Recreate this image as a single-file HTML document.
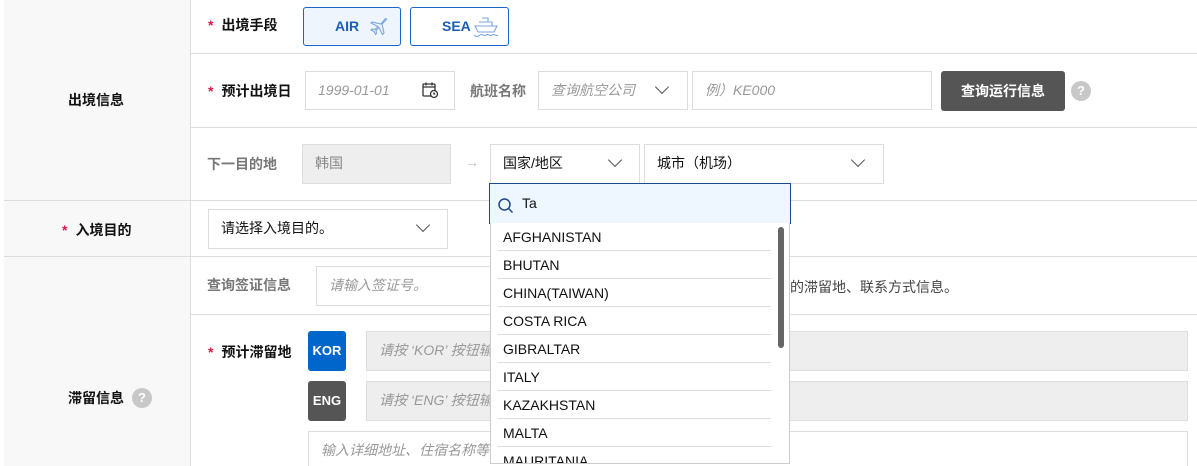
<!DOCTYPE html>
<html><head><meta charset="utf-8"><style>
*{box-sizing:border-box;margin:0;padding:0}
html,body{width:1197px;height:466px;overflow:hidden}
body{background:#fff;font-family:"Liberation Sans","Noto Sans CJK SC",sans-serif;font-size:14px;color:#111;position:relative}
.a{position:absolute}
.hl{position:absolute;height:1px;background:#ddd}
.lab{position:absolute;font-weight:bold;font-size:14px;color:#111;line-height:16px}
.st{color:#e0154a;font-weight:bold;margin-right:8px}
.box{position:absolute;border:1px solid #ddd;background:#fff;line-height:37px;padding-left:12px;font-size:14px}
.ph{color:#999;font-style:italic}
.chev{position:absolute;width:10px;height:10px;border-right:1.3px solid #555;border-bottom:1.3px solid #555;transform:rotate(45deg)}
.q{position:absolute;width:20px;height:20px;border-radius:50%;background:#c8c8c8;color:#fff;font-weight:bold;text-align:center;line-height:20px;font-size:13px}
.it{position:absolute;left:7px;padding-left:5px;width:273px;height:28px;line-height:28px;border-bottom:1px solid #ddd;font-size:14px;color:#111}
</style></head><body>
<div class="a" style="left:4px;top:0;width:187px;height:466px;background:#f8f8f8;border-right:1px solid #ddd"></div>
<div class="hl" style="left:191px;top:53px;width:1006px"></div>
<div class="hl" style="left:191px;top:127px;width:1006px"></div>
<div class="hl" style="left:4px;top:200px;width:1193px"></div>
<div class="hl" style="left:4px;top:256px;width:1193px"></div>
<div class="hl" style="left:191px;top:314px;width:1006px"></div>

<div class="lab" style="left:68px;top:92px">出境信息</div>
<div class="lab" style="left:62px;top:222px"><span class="st">*</span>入境目的</div>
<div class="lab" style="left:68px;top:390px">滞留信息</div>
<div class="q" style="left:132px;top:388px">?</div>

<div class="lab" style="left:208px;top:17px"><span class="st">*</span>出境手段</div>
<div class="a" style="left:303px;top:7px;width:98px;height:39px;border:1px solid #1a66c9;border-radius:3px;background:#eef5fd;color:#1a5fb4;font-weight:bold;line-height:37px;padding-left:31px;font-size:14px">AIR
<svg class="a" style="left:63px;top:8px" width="22" height="22" viewBox="0 0 22 22" fill="none" stroke="#7aa6dc" stroke-width="1.1"><path d="M18 3c1-1 2 0 1 1l-4 4 2 9-1.5 1.5-3.5-7-3 3 .5 3-1 1-1.5-3-3-1.5 1-1 3 .5 3-3-7-3.5L5 6l9 2z"/></svg></div>
<div class="a" style="left:410px;top:7px;width:99px;height:39px;border:1px solid #1a66c9;border-radius:3px;background:#fff;color:#1a5fb4;font-weight:bold;line-height:37px;padding-left:31px;font-size:14px">SEA
<svg class="a" style="left:61px;top:7px" width="28" height="24" viewBox="0 0 28 24" fill="none" stroke="#7aa6dc" stroke-width="1.1"><path d="M10 3h6v4M7 7h13v4M3 11h22l-3 6H6z M2 20c2 2 4 2 6 0s4 2 6 0 4 2 6 0 4 2 6 0"/></svg></div>

<div class="lab" style="left:208px;top:83px"><span class="st">*</span>预计出境日</div>
<div class="box ph" style="left:305px;top:71px;width:150px;height:39px">1999-01-01</div>
<svg class="a" style="left:421px;top:81px" width="18" height="18" viewBox="0 0 18 18" fill="none" stroke="#333" stroke-width="1.3"><rect x="2" y="3" width="12" height="12" rx="1"/><path d="M2 6h12M5 1.5v3M11 1.5v3"/><circle cx="13" cy="13" r="3.5" fill="#fff"/><path d="M13 11.5V13h1.3"/></svg>
<div class="lab" style="left:470px;top:83px;color:#777">航班名称</div>
<div class="box ph" style="left:538px;top:71px;width:150px;height:39px">查询航空公司</div>
<div class="chev" style="left:657px;top:82px"></div>
<div class="box ph" style="left:692px;top:71px;width:240px;height:39px">例）KE000</div>
<div class="a" style="left:941px;top:71px;width:124px;height:40px;background:#555;border-radius:3px;color:#fff;font-weight:bold;text-align:center;line-height:40px">查询运行信息</div>
<div class="q" style="left:1071px;top:81px">?</div>

<div class="lab" style="left:207px;top:156px;color:#777">下一目的地</div>
<div class="box" style="left:302px;top:144px;width:149px;height:40px;background:#eee;color:#888">韩国</div>
<div class="a" style="left:465px;top:154px;color:#bbb;font-size:14px">→</div>
<div class="box" style="left:490px;top:144px;width:150px;height:40px">国家/地区</div>
<div class="chev" style="left:610px;top:155px"></div>
<div class="box" style="left:644px;top:144px;width:240px;height:40px">城市（机场）</div>
<div class="chev" style="left:853px;top:155px"></div>

<div class="box" style="left:208px;top:209px;width:240px;height:40px">请选择入境目的。</div>
<div class="chev" style="left:418px;top:220px"></div>

<div class="lab" style="left:207px;top:277px;color:#777">查询签证信息</div>
<div class="box ph" style="left:316px;top:266px;width:474px;height:40px">请输入签证号。</div>
<div class="a" style="left:790px;top:277px;color:#444;font-size:14px">的滞留地、联系方式信息。</div>

<div class="lab" style="left:208px;top:344px"><span class="st">*</span>预计滞留地</div>
<div class="a" style="left:308px;top:331px;width:38px;height:40px;background:#0066cc;border-radius:3px;color:#fff;font-weight:bold;text-align:center;line-height:40px;font-size:13px">KOR</div>
<div class="box ph" style="left:366px;top:331px;width:822px;height:40px;background:#eee">请按 ‘KOR’ 按钮输入</div>
<div class="a" style="left:308px;top:381px;width:38px;height:40px;background:#555;border-radius:3px;color:#fff;font-weight:bold;text-align:center;line-height:40px;font-size:13px">ENG</div>
<div class="box ph" style="left:366px;top:381px;width:822px;height:40px;background:#eee">请按 ‘ENG’ 按钮输入</div>
<div class="box ph" style="left:308px;top:431px;width:880px;height:35px;border-bottom:none">输入详细地址、住宿名称等</div>

<div class="a" style="left:489px;top:183px;width:302px;height:41px;border:1px solid #1a4a8a;background:#eef6ff"></div>
<svg class="a" style="left:497px;top:197px" width="18" height="18" viewBox="0 0 18 18" fill="none" stroke="#1a4a8a" stroke-width="1.5"><circle cx="7.5" cy="7.5" r="5.5"/><path d="M11.5 11.5l4 4"/></svg>
<div class="a" style="left:522px;top:195px;font-size:14px">Ta</div>
<div class="a" style="left:490px;top:223px;width:300px;height:241px;border:1px solid #ccc;border-top:none;background:#fff;overflow:hidden">
<div class="it" style="top:0">AFGHANISTAN</div>
<div class="it" style="top:28px">BHUTAN</div>
<div class="it" style="top:56px">CHINA(TAIWAN)</div>
<div class="it" style="top:84px">COSTA RICA</div>
<div class="it" style="top:112px">GIBRALTAR</div>
<div class="it" style="top:140px">ITALY</div>
<div class="it" style="top:168px">KAZAKHSTAN</div>
<div class="it" style="top:196px">MALTA</div>
<div class="it" style="top:224px">MAURITANIA</div>
<div class="a" style="left:287px;top:4px;width:6px;height:121px;background:#666;border-radius:3px"></div>
</div>
</body></html>
